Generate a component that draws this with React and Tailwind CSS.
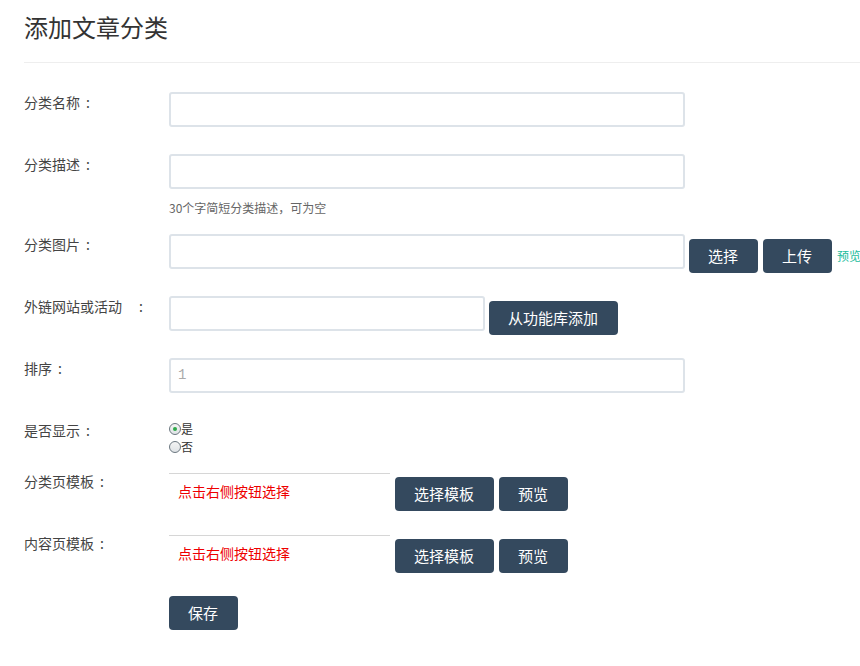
const font = "font-['Microsoft_YaHei','Noto_Sans_CJK_SC',sans-serif]";

const Button = ({ children, className = "" }) => (
  <button
    type="button"
    className={`h-[34px] shrink-0 whitespace-nowrap rounded-[4px] bg-[#34495e] pl-[19px] pr-[20px] text-[15px] leading-[34px] text-white ${className}`}
  >
    {children}
  </button>
);

const TextInput = ({ className = "w-[516px]", value = "" }) => (
  <div
    className={`h-[35px] shrink-0 rounded-[3px] border-2 border-[#dde3e9] bg-white pl-[7px] font-['Liberation_Mono',monospace] text-[14px] leading-[31px] text-[#aaa] ${className}`}
  >
    {value}
  </div>
);

// label text with a centred colon after it
const Label = ({ text, gap = "ml-[6px]" }) => (
  <div className="flex w-[145px] shrink-0 text-[14px] leading-[20px] text-[#444]">
    <span>{text}</span>
    <span className={gap}>:</span>
  </div>
);

const Radio = ({ checked, label }) => (
  <div className="flex h-[18px] items-center">
    <span className="flex h-[12px] w-[12px] items-center justify-center rounded-full border border-[#6b7780] bg-gradient-to-b from-[#f4f4f4] to-[#dfe3e6]">
      {checked && <span className="h-[4px] w-[4px] rounded-full bg-[#2ea84a]" />}
    </span>
    <span className="text-[12px] leading-[18px] text-[#333]">{label}</span>
  </div>
);

const TemplatePicker = () => (
  <div className="mt-[2px] flex items-start">
    <div className="h-[38px] w-[221px] shrink-0 border-t border-[#d6d6d6] pl-[9px] pt-[7px] text-[14px] leading-[20px] text-[#e00]">
      点击右侧按钮选择
    </div>
    <Button className="ml-[5px] mt-[4px]">选择模板</Button>
    <Button className="ml-[5px] mt-[4px]">预览</Button>
  </div>
);

export default function App() {
  return (
    <div className={`h-[666px] w-[860px] overflow-hidden bg-white pl-6 ${font}`}>
      <h1 className="border-b border-[#eee] pb-[23px] pt-[15px] text-[24px] font-normal leading-[24px] text-[#333]">
        添加文章分类
      </h1>

      <div className="mt-[29px] flex w-[900px] flex-col whitespace-nowrap">
        <div className="mb-[27px] flex">
          <Label text="分类名称" />
          <TextInput />
        </div>

        <div className="mb-[18px] flex">
          <Label text="分类描述" />
          <div>
            <TextInput />
            <div className="mt-[11px] text-[12px] leading-[16px] text-[#666]">30个字简短分类描述，可为空</div>
          </div>
        </div>

        <div className="mb-[23px] flex">
          <Label text="分类图片" />
          <TextInput />
          <div className="mt-[5px] flex items-center">
            <Button className="ml-[4px]">选择</Button>
            <Button className="ml-[5px]">上传</Button>
            <a className="ml-[5px] shrink-0 text-[12px] text-[#1abc9c]">预览</a>
          </div>
        </div>

        <div className="mb-[23px] flex">
          <Label text="外链网站或活动" gap="ml-[17px]" />
          <TextInput className="w-[316px]" />
          <Button className="ml-[4px] mt-[5px]">从功能库添加</Button>
        </div>

        <div className="mb-[27px] flex">
          <Label text="排序" />
          <TextInput value="1" />
        </div>

        <div className="mb-[15px] flex">
          <Label text="是否显示" />
          <div className="flex flex-col">
            <Radio checked label="是" />
            <Radio label="否" />
          </div>
        </div>

        <div className="mb-[22px] flex">
          <Label text="分类页模板" />
          <TemplatePicker />
        </div>

        <div className="mb-[23px] flex">
          <Label text="内容页模板" />
          <TemplatePicker />
        </div>

        <div className="flex pl-[145px]">
          <Button>保存</Button>
        </div>
      </div>
    </div>
  );
}
